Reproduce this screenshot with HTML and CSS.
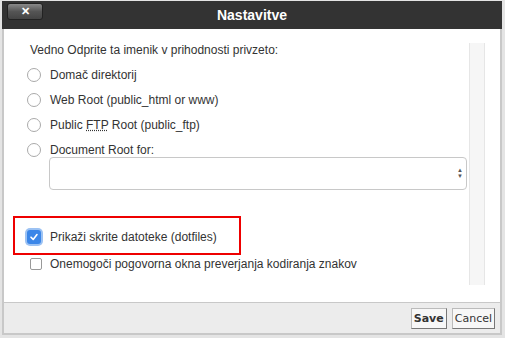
FILE: index.html
```html
<!DOCTYPE html>
<html lang="sl">
<head>
    <title>Nastavitve</title>
    <link rel="stylesheet" href="styles.css">
</head>
<body>
    <div class="dlg">
        <div class="dlg-head">
            <button class="close">&#x2715;</button>
            <div class="title">Nastavitve</div>
        </div>
        <div class="dlg-body">
            <div class="scroll">
                <p class="lead">Vedno Odprite ta imenik v prihodnosti privzeto:</p>
                <label class="opt"><span class="radio"></span><span>Domač direktorij</span></label>
                <label class="opt"><span class="radio"></span><span>Web Root (public_html or www)</span></label>
                <label class="opt"><span class="radio"></span><span>Public <abbr>FTP</abbr> Root (public_ftp)</span></label>
                <label class="opt"><span class="radio"></span><span>Document Root for:</span></label>
                <div class="select"><span class="arrows">&#9650;<br>&#9660;</span></div>
                <div class="hl">
                    <label class="chk"><span class="box on">
                        <svg width="10" height="10" viewBox="0 0 10 10"><path d="M2 5.2 L4.2 7.4 L8 2.6" fill="none" stroke="#fff" stroke-width="1.6" stroke-linecap="round" stroke-linejoin="round"/></svg>
                    </span><span>Prikaži skrite datoteke (dotfiles)</span></label>
                </div>
                <label class="chk2"><span class="box"></span><span>Onemogoči pogovorna okna preverjanja kodiranja znakov</span></label>
            </div>
            <div class="track"></div>
        </div>
        <div class="dlg-foot">
            <button class="btn save">Save</button>
            <button class="btn">Cancel</button>
        </div>
    </div>
</body>
</html>
```
FILE: styles.css
```css
body {
    margin: 0;
    background: #e4e4e4;
    font-family: "Liberation Sans", Arial, sans-serif;
    font-size: 12px;
    color: #333;
}
.dlg {
    margin: 1px 3px 0 2px;
    width: 500px;
    background: #fff;
}
.dlg-head {
    height: 28px;
    background: #333;
    position: relative;
    display: flex;
    align-items: center;
    justify-content: center;
}
.close {
    position: absolute;
    left: 5px;
    top: 2px;
    width: 36px;
    height: 17px;
    padding: 0;
    border: 1px solid #222;
    border-radius: 3px;
    background: linear-gradient(#8a8a8a, #555 50%, #444);
    color: #fff;
    font-size: 11px;
    font-weight: bold;
    line-height: 13px;
}
.title {
    color: #fff;
    font-weight: bold;
    font-size: 14px;
}
.dlg-body {
    height: 273px;
    border-left: 2px solid #c8c8c8;
    border-right: 2px solid #c8c8c8;
    display: flex;
}
.scroll {
    flex: 1;
    padding: 15px 0 0 9px;
}
.lead {
    margin: 0 0 2px 17px;
    line-height: 13px;
}
.opt {
    display: flex;
    align-items: center;
    height: 14px;
    margin-top: 11px;
    padding-left: 14px;
}
.radio {
    width: 12px;
    height: 12px;
    border: 1px solid #aaa;
    border-radius: 50%;
    margin-right: 9px;
}
abbr {
    text-decoration: underline dotted;
}
.select {
    margin-left: 36px;
    width: 416px;
    height: 31px;
    border: 1px solid #c8c8c8;
    border-radius: 4px;
    position: relative;
}
.arrows {
    position: absolute;
    right: 3px;
    top: 9px;
    font-size: 6px;
    line-height: 6px;
    color: #555;
}
.hl {
    margin-top: 26px;
    width: 224px;
    height: 35px;
    border: 2px solid #e00;
    display: flex;
    align-items: center;
}
.chk {
    display: flex;
    align-items: center;
    padding-left: 12px;
    margin-top: 2px;
}
.box {
    width: 10px;
    height: 10px;
    border: 1px solid #999;
    border-radius: 2px;
    margin-right: 8px;
}
.box.on {
    width: 14px;
    height: 14px;
    border: none;
    border-radius: 3px;
    background: #3b86e8;
    box-shadow: 0 0 0 2px #9cc2f3;
    margin-right: 9px;
    display: flex;
    align-items: center;
    justify-content: center;
}
.chk2 {
    display: flex;
    align-items: center;
    height: 14px;
    padding-left: 17px;
    margin-top: 2px;
}
.track {
    width: 14px;
    margin: 14px 15px 17px 0;
    background: #f6f6f6;
    border-left: 1px solid #e6e6e6;
    border-right: 1px solid #e6e6e6;
}
.dlg-foot {
    height: 30px;
    background: #ececec;
    border: 2px solid #c8c8c8;
    border-top: 1px solid #c8c8c8;
    display: flex;
    justify-content: flex-end;
    align-items: center;
    gap: 5px;
    padding-right: 5px;
}
.btn {
    font-family: "DejaVu Sans", Verdana, sans-serif;
    font-size: 11px;
    height: 21px;
    padding: 0 2px;
    background: #f7f7f7;
    color: #333;
    border: 1px solid #bbb;
    border-right-color: #777;
    border-bottom-color: #777;
}
.save {
    font-weight: bold;
}
```
